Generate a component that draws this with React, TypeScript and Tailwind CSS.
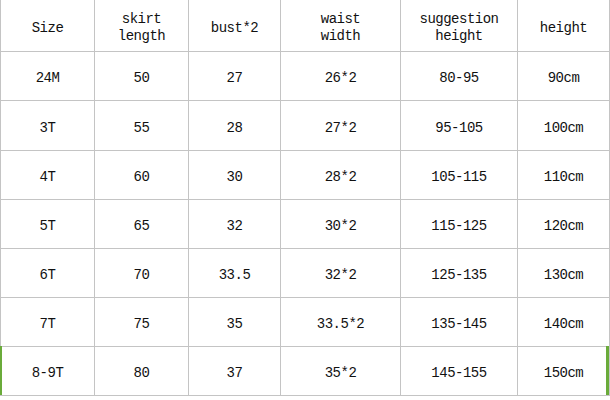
import React from 'react';

const header: string[][] = [
  ['Size'],
  ['skirt', 'length'],
  ['bust*2'],
  ['waist', 'width'],
  ['suggestion', 'height'],
  ['height'],
];

const rows: string[][] = [
  ['24M', '50', '27', '26*2', '80-95', '90cm'],
  ['3T', '55', '28', '27*2', '95-105', '100cm'],
  ['4T', '60', '30', '28*2', '105-115', '110cm'],
  ['5T', '65', '32', '30*2', '115-125', '120cm'],
  ['6T', '70', '33.5', '32*2', '125-135', '130cm'],
  ['7T', '75', '35', '33.5*2', '135-145', '140cm'],
  ['8-9T', '80', '37', '35*2', '145-155', '150cm'],
];

const App: React.FC = () => {
  return (
    <div className="w-[610px] h-[400px] bg-white overflow-hidden">
      <div className="relative">
        {/* size table */}
        <div
          className="grid grid-cols-[93px_93px_91px_119px_116px_91px] grid-rows-[51px_48px_49px_48px_48px_48px_48px_48px] gap-px bg-[#c4c4c4] px-px pb-px text-[14px] tracking-[-0.5px] text-[#111] font-['Liberation_Mono',monospace]"
        >
          {header.map((lines, i) => (
            <div key={`h${i}`} className="bg-white flex flex-col items-center justify-center pt-[5px] leading-[17px]">
              {lines.map((l) => (
                <span key={l}>{l}</span>
              ))}
            </div>
          ))}
          {rows.map((row, r) =>
            row.map((cell, c) => (
              <div key={`${r}-${c}`} className="bg-white flex items-center justify-center pt-[5px]">
                {cell}
              </div>
            ))
          )}
        </div>
        {/* green selection marks on the last row */}
        <span className="absolute left-0 top-[346px] h-[49px] w-[2px] bg-[#6aab3a]" />
        <span className="absolute right-[1px] top-[346px] h-[49px] w-[3px] bg-[#6aab3a]" />
      </div>
    </div>
  );
};

export default App;
